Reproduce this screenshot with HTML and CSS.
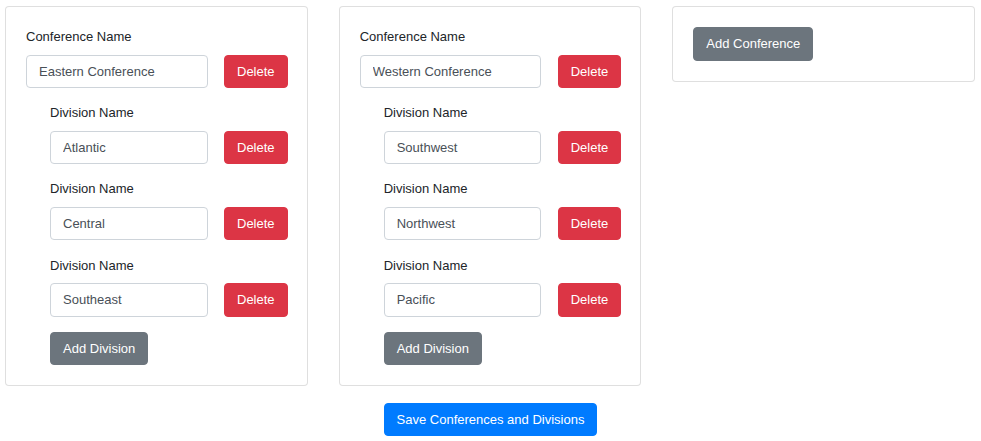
FILE: index.html
```html
<!DOCTYPE html>
<html>
<head>
<meta charset="utf-8">
<link rel="stylesheet" href="styles.css">
</head>
<body>
<div class="page">
  <div class="columns">
    <div class="card">
      <div class="group">
        <label class="lbl">Conference Name</label>
        <div class="row">
          <input class="field field-conf" value="Eastern Conference">
          <button class="btn btn-danger">Delete</button>
        </div>
      </div>
      <div class="divisions">
        <div class="group">
          <label class="lbl">Division Name</label>
          <div class="row">
            <input class="field field-div" value="Atlantic">
            <button class="btn btn-danger">Delete</button>
          </div>
        </div>
        <div class="group">
          <label class="lbl">Division Name</label>
          <div class="row">
            <input class="field field-div" value="Central">
            <button class="btn btn-danger">Delete</button>
          </div>
        </div>
        <div class="group">
          <label class="lbl">Division Name</label>
          <div class="row">
            <input class="field field-div" value="Southeast">
            <button class="btn btn-danger">Delete</button>
          </div>
        </div>
        <button class="btn btn-secondary">Add Division</button>
      </div>
    </div>
    <div class="card">
      <div class="group">
        <label class="lbl">Conference Name</label>
        <div class="row">
          <input class="field field-conf" value="Western Conference">
          <button class="btn btn-danger">Delete</button>
        </div>
      </div>
      <div class="divisions">
        <div class="group">
          <label class="lbl">Division Name</label>
          <div class="row">
            <input class="field field-div" value="Southwest">
            <button class="btn btn-danger">Delete</button>
          </div>
        </div>
        <div class="group">
          <label class="lbl">Division Name</label>
          <div class="row">
            <input class="field field-div" value="Northwest">
            <button class="btn btn-danger">Delete</button>
          </div>
        </div>
        <div class="group">
          <label class="lbl">Division Name</label>
          <div class="row">
            <input class="field field-div" value="Pacific">
            <button class="btn btn-danger">Delete</button>
          </div>
        </div>
        <button class="btn btn-secondary">Add Division</button>
      </div>
    </div>
    <div class="card">
      <button class="btn btn-secondary">Add Conference</button>
    </div>
  </div>
  <div class="save-row">
    <button class="btn btn-primary">Save Conferences and Divisions</button>
  </div>
</div>
</body>
</html>
```

FILE: styles.css
```css
* { box-sizing: border-box; }
html, body {
  margin: 0;
  padding: 0;
  background: #fff;
  font-family: "Liberation Sans", Arial, sans-serif;
  font-size: 13px;
  line-height: 1.5;
  color: #212529;
}
.page {
  padding: 6px 6px 0 5px;
}
.columns {
  display: grid;
  grid-template-columns: repeat(3, minmax(0, 1fr));
  column-gap: 31px;
  align-items: start;
}
.card {
  border: 1px solid rgba(0, 0, 0, 0.125);
  border-radius: 4px;
  padding: 20px;
  background: #fff;
  min-width: 0;
}
.group {
  margin-bottom: 15.2px;
}
.lbl {
  display: block;
  margin-bottom: 8px;
  line-height: 19.5px;
}
.row {
  display: flex;
  align-items: center;
  column-gap: 16.5px;
}
.field {
  flex: none;
  font-family: inherit;
  font-size: 13px;
  line-height: 19.5px;
  height: 33.5px;
  padding: 6px 12px;
  color: #495057;
  background: #fff;
  border: 1px solid #ced4da;
  border-radius: 4px;
  outline: none;
}
.field-conf { width: 181.5px; }
.field-div { width: 157.5px; }
.divisions {
  margin-left: 24px;
}
.btn {
  flex: none;
  font-family: inherit;
  font-size: 13px;
  line-height: 19.5px;
  padding: 6px 12px;
  border: 1px solid transparent;
  border-radius: 4px;
  color: #fff;
  cursor: pointer;
}
.btn-danger { background: #dc3545; border-color: #dc3545; }
.btn-secondary { background: #6c757d; border-color: #6c757d; }
.btn-primary { background: #007bff; border-color: #007bff; }
.save-row {
  display: flex;
  justify-content: center;
  margin-top: 16.5px;
  padding-left: 1px;
}
```
